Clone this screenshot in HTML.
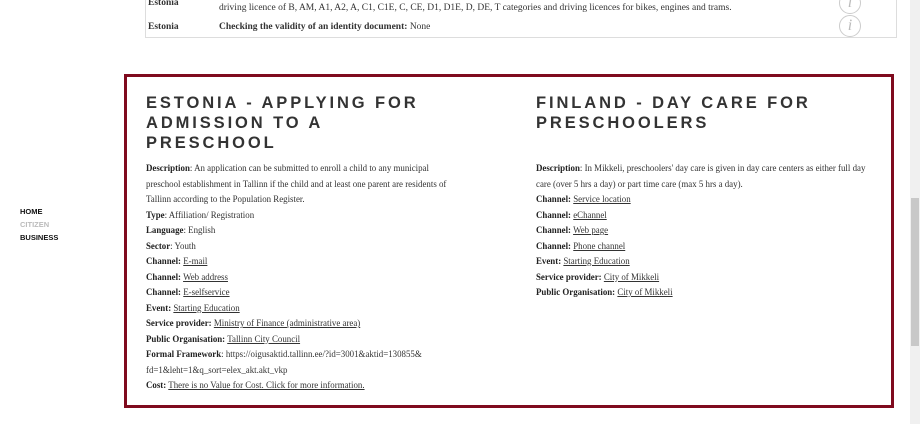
<!DOCTYPE html>
<html><head><meta charset="utf-8"><style>
*{margin:0;padding:0;box-sizing:border-box}
body{width:920px;height:424px;overflow:hidden;background:#fff;position:relative;font-family:"Liberation Serif",serif;color:#333}
.tbl{position:absolute;left:145px;top:-10px;width:752px;height:48px;border:1px solid #ddd;border-top:none}
.tbl div{position:absolute;font-size:9.5px}
.info{position:absolute;left:839px;width:22px;height:22px;border:1.5px solid #ccc;border-radius:50%;color:#bbb;font-style:italic;font-size:16px;text-align:center;line-height:19px;font-family:"Liberation Serif",serif}
.box{position:absolute;left:124px;top:74px;width:770px;height:334px;border:3px solid #7f0a1e}
h2{position:absolute;font-family:"Liberation Sans",sans-serif;font-weight:bold;font-size:16.5px;letter-spacing:2.9px;line-height:20px;color:#333;top:93px}
.col{position:absolute;top:161px;font-size:8.9px;line-height:15.5px;color:#333}
.col b{color:#222}
.col a{color:#333;text-decoration:underline}
.nav{position:absolute;left:20px;top:205px;font-family:"Liberation Sans",sans-serif;font-weight:bold;font-size:7.5px;line-height:13px;color:#111}
.sb{position:absolute;left:910px;top:0;width:10px;height:424px;background:#f0f0f0}
.th{position:absolute;left:911px;top:198px;width:8px;height:148px;background:#c8c8c8}
</style></head><body>
<div class="tbl">
<div style="left:2px;top:8px;font-weight:bold">Estonia</div>
<div style="left:73px;top:13px;">driving licence of B, AM, A1, A2, A, C1, C1E, C, CE, D1, D1E, D, DE, T categories and driving licences for bikes, engines and trams.</div>
<div style="left:2px;top:32px;font-weight:bold">Estonia</div>
<div style="left:73px;top:32px;"><b>Checking the validity of an identity document:</b> None</div>
</div>
<div class="info" style="top:-8px">i</div>
<div class="info" style="top:15px">i</div>
<div class="box"></div>
<h2 style="left:146px">ESTONIA - APPLYING FOR<br>ADMISSION TO A<br>PRESCHOOL</h2>
<h2 style="left:536px">FINLAND - DAY CARE FOR<br>PRESCHOOLERS</h2>
<div class="col" style="left:146px;width:330px">
<b>Description</b>: An application can be submitted to enroll a child to any municipal<br>preschool establishment in Tallinn if the child and at least one parent are residents of<br>Tallinn according to the Population Register.<br>
<b>Type</b>: Affiliation/ Registration<br><b>Language</b>: English<br><b>Sector</b>: Youth<br>
<b>Channel:</b> <a>E-mail</a><br><b>Channel:</b> <a>Web address</a><br><b>Channel:</b> <a>E-selfservice</a><br>
<b>Event:</b> <a>Starting Education</a><br><b>Service provider:</b> <a>Ministry of Finance (administrative area)</a><br>
<b>Public Organisation:</b> <a>Tallinn City Council</a><br>
<b>Formal Framework</b>: https://oigusaktid.tallinn.ee/?id=3001&amp;aktid=130855&amp;<br>fd=1&amp;leht=1&amp;q_sort=elex_akt.akt_vkp<br>
<b>Cost:</b> <a>There is no Value for Cost. Click for more information.</a>
</div>
<div class="col" style="left:536px;width:350px">
<b>Description</b>: In Mikkeli, preschoolers' day care is given in day care centers as either full day<br>care (over 5 hrs a day) or part time care (max 5 hrs a day).<br>
<b>Channel:</b> <a>Service location</a><br><b>Channel:</b> <a>eChannel</a><br><b>Channel:</b> <a>Web page</a><br><b>Channel:</b> <a>Phone channel</a><br>
<b>Event:</b> <a>Starting Education</a><br><b>Service provider:</b> <a>City of Mikkeli</a><br><b>Public Organisation:</b> <a>City of Mikkeli</a>
</div>
<div class="nav">HOME<br><span style="color:#bbb">CITIZEN</span><br>BUSINESS</div>
<div class="sb"></div><div class="th"></div>
</body></html>
